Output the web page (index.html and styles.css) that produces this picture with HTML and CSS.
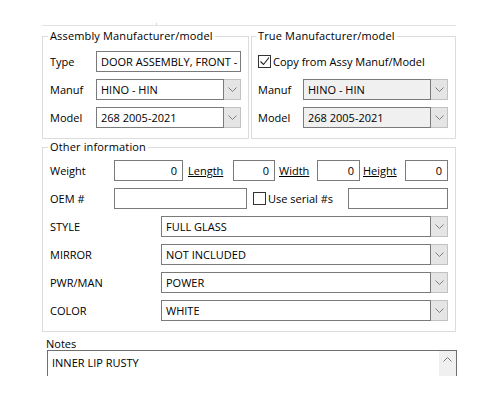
FILE: index.html
```html
<!DOCTYPE html>
<html lang="en">
<head>
    <meta charset="UTF-8">
    <title>Part details</title>
    <link rel="stylesheet" href="styles.css">
</head>
<body>
<div class="form">
    <div class="topline"><span class="tick"></span></div>

    <div class="mfr-row">
        <fieldset class="group">
            <legend>Assembly Manufacturer/model</legend>
            <div class="pairs">
                <label>Type</label>
                <div class="field">DOOR ASSEMBLY, FRONT -</div>
                <label>Manuf</label>
                <div class="combo">
                    <span class="value">HINO - HIN</span>
                    <span class="drop"><svg width="9" height="5" viewBox="0 0 9 5"><path d="M0.5 0.5l4 4 4-4"/></svg></span>
                </div>
                <label>Model</label>
                <div class="combo">
                    <span class="value">268 2005-2021</span>
                    <span class="drop"><svg width="9" height="5" viewBox="0 0 9 5"><path d="M0.5 0.5l4 4 4-4"/></svg></span>
                </div>
            </div>
        </fieldset>

        <fieldset class="group true-mfr">
            <legend>True Manufacturer/model</legend>
            <div class="pairs narrow">
                <label class="check wide">
                    <span class="box"><svg width="11" height="11" viewBox="0 0 11 11"><path d="M1.5 5.5l3 3 5.5-7"/></svg></span>
                    Copy from Assy Manuf/Model
                </label>
                <label>Manuf</label>
                <div class="combo disabled">
                    <span class="value">HINO - HIN</span>
                    <span class="drop"><svg width="9" height="5" viewBox="0 0 9 5"><path d="M0.5 0.5l4 4 4-4"/></svg></span>
                </div>
                <label>Model</label>
                <div class="combo disabled">
                    <span class="value">268 2005-2021</span>
                    <span class="drop"><svg width="9" height="5" viewBox="0 0 9 5"><path d="M0.5 0.5l4 4 4-4"/></svg></span>
                </div>
            </div>
        </fieldset>
    </div>

    <fieldset class="group other">
        <legend>Other information</legend>
        <div class="rows">
            <div class="row">
                <label class="lbl">Weight</label>
                <div class="field num w-weight">0</div>
                <label class="dim w-length">Length</label>
                <div class="field num w-small">0</div>
                <label class="dim w-width">Width</label>
                <div class="field num w-small2">0</div>
                <label class="dim w-height">Height</label>
                <div class="field num w-small2">0</div>
            </div>
            <div class="row">
                <label class="lbl">OEM #</label>
                <div class="field w-oem"></div>
                <label class="check serial">
                    <span class="box"></span>
                    Use serial #s
                </label>
                <div class="field w-serial"></div>
            </div>
            <div class="row">
                <label class="lbl attr">STYLE</label>
                <div class="combo grow">
                    <span class="value">FULL GLASS</span>
                    <span class="drop"><svg width="9" height="5" viewBox="0 0 9 5"><path d="M0.5 0.5l4 4 4-4"/></svg></span>
                </div>
            </div>
            <div class="row">
                <label class="lbl attr">MIRROR</label>
                <div class="combo grow">
                    <span class="value">NOT INCLUDED</span>
                    <span class="drop"><svg width="9" height="5" viewBox="0 0 9 5"><path d="M0.5 0.5l4 4 4-4"/></svg></span>
                </div>
            </div>
            <div class="row">
                <label class="lbl attr">PWR/MAN</label>
                <div class="combo grow">
                    <span class="value">POWER</span>
                    <span class="drop"><svg width="9" height="5" viewBox="0 0 9 5"><path d="M0.5 0.5l4 4 4-4"/></svg></span>
                </div>
            </div>
            <div class="row">
                <label class="lbl attr">COLOR</label>
                <div class="combo grow">
                    <span class="value">WHITE</span>
                    <span class="drop"><svg width="9" height="5" viewBox="0 0 9 5"><path d="M0.5 0.5l4 4 4-4"/></svg></span>
                </div>
            </div>
        </div>
    </fieldset>

    <div class="notes-label">Notes</div>
    <div class="notes">
        <div class="notes-text">INNER LIP RUSTY</div>
        <div class="scroll">
            <svg width="9" height="5" viewBox="0 0 9 5"><path d="M0.5 4.5l4-4 4 4"/></svg>
        </div>
    </div>
</div>
</body>
</html>
```

FILE: styles.css
```css
:root {
    --group-line: #dcdcdc;
    --field-line: #7a7a7a;
    --btn-bg: #e5e5e5;
    --btn-line: #c2c2c2;
    --disabled-bg: #f0f0f0;
}

body {
    margin: 0;
    background: #fff;
    font-family: 'Open Sans', 'Noto Sans', sans-serif;
    font-size: 11px;
    color: #000;
}

.form {
    width: 414px;
    margin-left: 42px;
}

/* edge of the panel above */
.topline {
    padding-top: 23px;
    border-bottom: 1px solid #e3e3e3;
}

.tick {
    display: block;
    width: 1px;
    height: 2px;
    margin-left: 114px;
    background: #d0d0d0;
}

.mfr-row {
    display: grid;
    grid-template-columns: 207px 205px;
    gap: 2px;
    margin-top: 2px;
}

.group {
    margin: 0;
    min-width: 0;
    border: 1px solid var(--group-line);
    padding: 0 7px 10px 7px;
}

.group legend {
    line-height: 16px;
    padding: 0 2px;
    margin-left: -2px;
    letter-spacing: 0.15px;
}

.true-mfr {
    padding-left: 6px;
}

.pairs {
    display: grid;
    grid-template-columns: 46px 1fr;
    grid-auto-rows: 21px;
    row-gap: 7px;
    align-items: center;
    margin-top: 7px;
}

.pairs.narrow {
    grid-template-columns: 45px 1fr;
}

.wide {
    grid-column: 1 / -1;
}

/* text boxes */
.field {
    box-sizing: border-box;
    height: 21px;
    border: 1px solid var(--field-line);
    background: #fff;
    padding: 0 4px;
    line-height: 19px;
    white-space: nowrap;
    overflow: hidden;
}

.field.num {
    text-align: right;
    padding-right: 5px;
}

/* drop-down lists */
.combo {
    display: flex;
    height: 21px;
    box-sizing: border-box;
}

.combo .value {
    flex: 1;
    min-width: 0;
    border: 1px solid var(--field-line);
    padding: 0 4px;
    line-height: 19px;
    background: #fff;
    white-space: nowrap;
    overflow: hidden;
}

.combo .drop {
    width: 16px;
    border: 1px solid var(--btn-line);
    border-left: none;
    background: var(--btn-bg);
    display: flex;
    align-items: center;
    justify-content: center;
}

.combo.disabled .value {
    background: var(--disabled-bg);
}

.drop svg path,
.scroll svg path {
    fill: none;
    stroke: #7d7d7d;
    stroke-width: 1;
}

.combo.grow {
    flex: 1;
}

/* check boxes */
.check {
    display: flex;
    align-items: center;
    gap: 2px;
}

.box {
    width: 13px;
    height: 13px;
    box-sizing: border-box;
    border: 1px solid #333;
    background: #fff;
    display: flex;
    align-items: center;
    justify-content: center;
}

.box svg path {
    fill: none;
    stroke: #222;
    stroke-width: 1.1;
}

/* other information */
.rows {
    display: flex;
    flex-direction: column;
    gap: 7px;
    margin-top: 5px;
}

.row {
    display: flex;
    align-items: center;
    height: 21px;
}

.lbl {
    width: 64px;
    flex: none;
}

.lbl.attr {
    width: 111px;
}

.dim {
    text-decoration: underline;
    flex: none;
}

.w-weight { width: 69px; flex: none; }
.w-small { width: 42px; flex: none; }
.w-small2 { width: 43px; flex: none; }
.w-length { margin-left: 5px; width: 45px; }
.w-width { margin-left: 4px; width: 38px; }
.w-height { margin-left: 3px; width: 42px; }
.w-oem { width: 133px; flex: none; }
.w-serial { width: 100px; flex: none; margin-left: auto; }

.serial {
    margin-left: 6px;
}

/* notes */
.notes-label {
    margin-top: 3px;
    padding-top: 2px;
    margin-left: 4px;
    line-height: 13px;
}

.notes {
    display: flex;
    width: 410px;
    height: 26px;
    margin-left: 5px;
    box-sizing: border-box;
    border: 1px solid #6f6f6f;
    border-bottom: none;
    overflow: hidden;
}

.notes-text {
    flex: 1;
    padding: 4px 4px 0;
    line-height: 16px;
}

.scroll {
    width: 17px;
    background: var(--disabled-bg);
    display: flex;
    justify-content: center;
    padding-top: 6px;
    box-sizing: border-box;
}
```
